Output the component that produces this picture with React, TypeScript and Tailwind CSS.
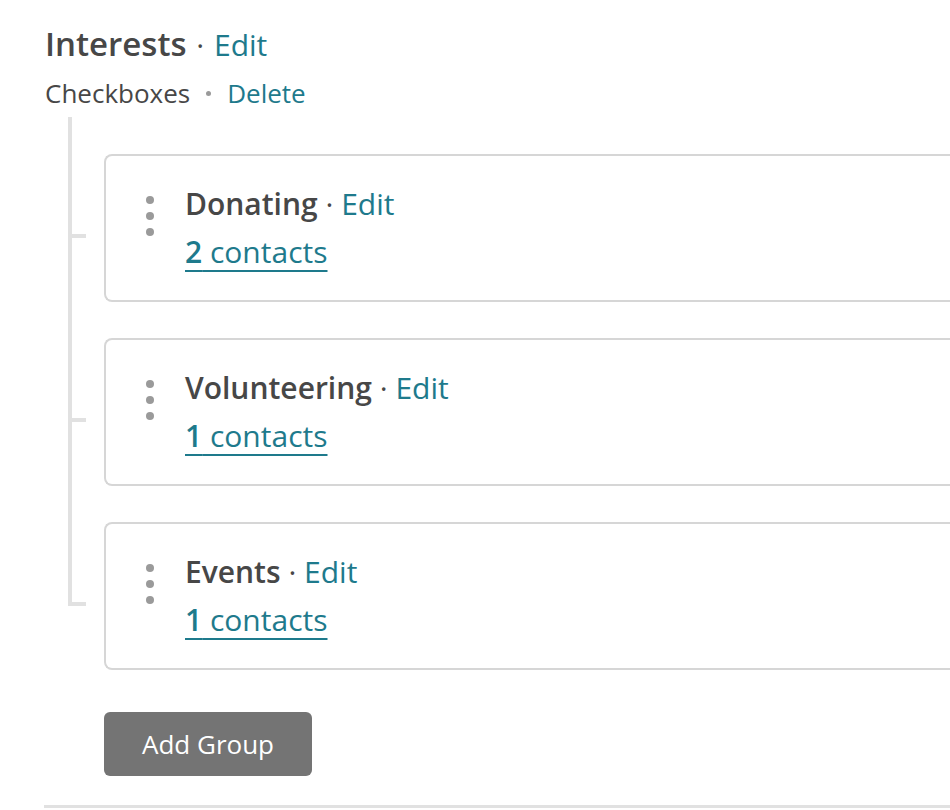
const groups = [
  { name: "Donating", count: 2 },
  { name: "Volunteering", count: 1 },
  { name: "Events", count: 1 },
];

function Dots() {
  return (
    <div className="flex flex-col gap-[8px] pt-[16px]">
      <span className="w-[8px] h-[8px] rounded-full bg-[#9a9a9a]" />
      <span className="w-[8px] h-[8px] rounded-full bg-[#9a9a9a]" />
      <span className="w-[8px] h-[8px] rounded-full bg-[#9a9a9a]" />
    </div>
  );
}

function GroupRow({
  group,
  first,
  last,
}: {
  group: { name: string; count: number };
  first: boolean;
  last: boolean;
}) {
  return (
    <div className="flex flex-row">
      <div className="w-[36px] flex flex-col shrink-0">
        <div
          className={`w-[4px] bg-[#e1e1e1] ${first ? "h-[117px]" : "h-[116px]"}`}
        />
        <div className="w-[18px] h-[4px] bg-[#e1e1e1]" />
        {!last && <div className="w-[4px] flex-1 bg-[#e1e1e1]" />}
      </div>
      <div className={`flex-1 ${first ? "pt-[37px]" : "pt-[36px]"}`}>
        <div className="h-[148px] border-2 border-[#d6d6d6] border-r-0 rounded-l-[8px] flex flex-row pl-[40px] pt-[24px]">
          <Dots />
          <div className="ml-[31px] text-[30px] leading-[48px]">
            <div>
              <span className="font-semibold text-[#474747]">{group.name}</span>
              <span className="text-[#474747]"> · </span>
              <a className="text-[#1e7a8c]">Edit</a>
            </div>
            <a className="text-[#1e7a8c] underline decoration-2 underline-offset-[7px]">
              <span className="font-semibold">{group.count}</span> contacts
            </a>
          </div>
        </div>
      </div>
    </div>
  );
}

export default function App() {
  return (
    <div
      className="bg-white w-[950px] h-[810px] overflow-hidden pl-[45px] pt-[20px]"
      style={{ fontFamily: '"Open Sans", "Noto Sans", sans-serif' }}
    >
      <h2 className="text-[33px] leading-[48px] text-[#474747]">
        <span className="font-semibold">Interests</span>
        <span className="text-[30px] ml-[2px]"> · </span>
        <a className="text-[30px] ml-[2px] text-[#1e7a8c]">Edit</a>
      </h2>
      <div className="flex flex-row items-center text-[26px] leading-[48px] text-[#474747]">
        <span>Checkboxes</span>
        <span className="ml-[16px] mr-[16px] w-[5px] h-[5px] rounded-full bg-[#9a9a9a]" />
        <a className="text-[#1e7a8c]">Delete</a>
      </div>
      <div className="ml-[23px]">
        {groups.map((g, i) => (
          <GroupRow
            key={g.name}
            group={g}
            first={i === 0}
            last={i === groups.length - 1}
          />
        ))}
        <div className="pl-[36px] pt-[42px]">
          <button className="w-[208px] h-[64px] rounded-[6px] bg-[#747474] text-white text-[26px] font-medium">
            Add Group
          </button>
        </div>
      </div>
      <div className="mt-[29px] h-[3px] bg-[#e1e1e1] -ml-px" />
    </div>
  );
}
